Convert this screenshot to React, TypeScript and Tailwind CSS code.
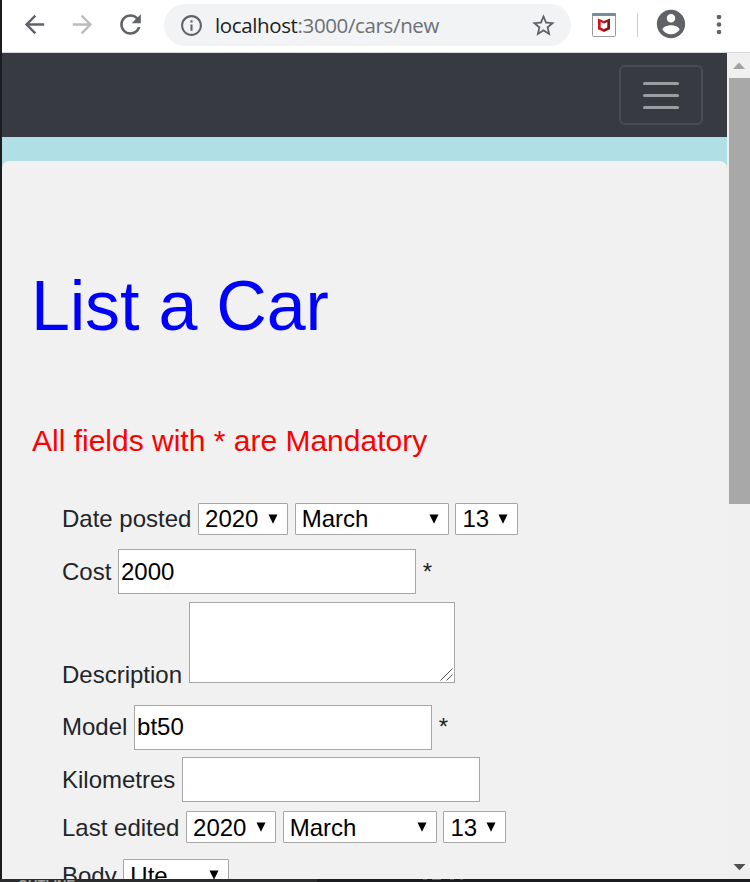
import type { ReactNode } from "react";

function Glyph({ d, className }: { d: string; className: string }) {
  return (
    <svg viewBox="0 0 24 24" fill="currentColor" className={`shrink-0 ${className}`}>
      <path d={d} />
    </svg>
  );
}

const icons = {
  back: "M20 11H7.83l5.59-5.59L12 4l-8 8 8 8 1.41-1.41L7.83 13H20v-2z",
  forward: "M12 4l-1.41 1.41L16.17 11H4v2h12.17l-5.58 5.59L12 20l8-8z",
  reload:
    "M17.65 6.35C16.2 4.9 14.21 4 12 4c-4.42 0-7.99 3.58-7.99 8s3.57 8 7.99 8c3.73 0 6.84-2.55 7.73-6h-2.08c-.82 2.33-3.04 4-5.65 4-3.31 0-6-2.69-6-6s2.69-6 6-6c1.66 0 3.14.69 4.22 1.78L13 11h7V4l-2.35 2.35z",
  info: "M11 17h2v-6h-2v6zm1-15C6.48 2 2 6.48 2 12s4.48 10 10 10 10-4.48 10-10S17.52 2 12 2zm0 18c-4.41 0-8-3.59-8-8s3.59-8 8-8 8 3.59 8 8-3.59 8-8 8zM11 9h2V7h-2v2z",
  star: "M22 9.24l-7.19-.62L12 2 9.19 8.63 2 9.24l5.46 4.73L5.82 21 12 17.27 18.18 21l-1.63-7.03L22 9.24zM12 15.4l-3.76 2.27 1-4.28-3.32-2.88 4.38-.38L12 6.1l1.71 4.04 4.38.38-3.32 2.88 1 4.28L12 15.4z",
  account:
    "M12 2C6.48 2 2 6.48 2 12s4.48 10 10 10 10-4.48 10-10S17.52 2 12 2zm0 3c1.66 0 3 1.34 3 3s-1.34 3-3 3-3-1.34-3-3 1.34-3 3-3zm0 14.2c-2.5 0-4.71-1.28-6-3.22.03-1.99 4-3.08 6-3.08 1.99 0 5.97 1.09 6 3.08-1.29 1.94-3.5 3.22-6 3.22z",
};

function Toolbar() {
  return (
    <header className="flex h-[53px] shrink-0 items-start border-b border-[#d5d7da] bg-white pl-[18px] text-[#5f6368]">
      <Glyph d={icons.back} className="mt-[9.5px] size-[29px]" />
      <Glyph d={icons.forward} className="mt-[9.5px] ml-[19px] size-[29px] text-[#babcbe]" />
      <Glyph d={icons.reload} className="mt-[9px] ml-[18px] size-[31px]" />
      <div className="mt-1 ml-[18px] flex h-[42px] w-[407px] items-center rounded-full bg-[#f1f3f4] pr-[14px] pl-[15px]">
        <Glyph d={icons.info} className="size-[25px]" />
        <span className="ml-[11px] flex-1 font-['Open_Sans',sans-serif] text-[20.5px] tracking-[-0.37px] whitespace-nowrap text-[#6c7074]">
          <span className="text-[#202124]">localhost</span>:3000/cars/new
        </span>
        <Glyph d={icons.star} className="size-[27px]" />
      </div>
      <svg viewBox="0 0 24 24" className="mt-[13px] ml-[21px] size-6 shrink-0">
        <rect x=".5" y=".5" width="23" height="23" rx="1" fill="#fff" stroke="#98999c" />
        <path d="M0 1q0-1 1-1h22q1 0 1 1v2H0z" fill="#748f9c" />
        <path d="M6 5.500l6 2.600v2.400L8.700 9v5.500L12 16v3l-6-2.800z" fill="#d3141c" />
        <path d="M18 5.500l-6 2.600v2.400L15.300 9v5.500L12 16v3l6-2.800z" fill="#89151a" />
      </svg>
      <span className="mt-[13px] ml-[21px] h-6 w-px bg-[#cccdcf]" />
      <Glyph d={icons.account} className="mt-[7px] ml-4 size-[34px]" />
      <svg viewBox="0 0 6 20" fill="currentColor" className="mt-[15px] ml-7 h-5 w-[6px] shrink-0">
        <circle cx="3" cy="2" r="2.3" />
        <circle cx="3" cy="9.5" r="2.3" />
        <circle cx="3" cy="17" r="2.3" />
      </svg>
    </header>
  );
}

function Scrollbar() {
  return (
    <div className="flex w-[23px] shrink-0 flex-col items-end justify-between bg-[#f0f0f0]">
      <div className="w-full">
        <svg viewBox="0 0 23 25" className="block h-[25px] w-[23px]">
          <path d="M12 9.5l6 6.5H6z" fill="#a2a2a2" />
        </svg>
        <div className="ml-[2px] h-[426px] bg-[#a8a8a8]" />
      </div>
      <svg viewBox="0 0 23 25" className="block h-[25px] w-[23px]">
        <path d="M6.500 10h12l-6 6.300z" fill="#505050" />
      </svg>
    </div>
  );
}

function Row({ label, className, labelClass, children }: { label: string; className: string; labelClass: string; children: ReactNode }) {
  return (
    <div className={`flex items-start gap-[6.67px] ${className}`}>
      <label className={labelClass}>{label}</label>
      {children}
    </div>
  );
}

function Select({ value, className, pad = "pb-px" }: { value: string; className: string; pad?: string }) {
  return (
    <div className={`relative h-8 shrink-0 ${className}`}>
      <select
        defaultValue={value}
        className={`block h-full w-full appearance-none rounded-[1px] border border-[#a6a6a6] bg-white pr-0 pl-[6px] leading-[30px] text-black ${pad}`}
      >
        <option>{value}</option>
      </select>
      <svg viewBox="0 0 10 10" className="absolute top-[11px] right-[10px] size-[10px]">
        <path d="M.5.5h9L5 9.700z" fill="#000" />
      </svg>
    </div>
  );
}

function TextInput({ value, pad = "" }: { value?: string; pad?: string }) {
  return (
    <input
      defaultValue={value}
      className={`h-[45px] w-[298px] shrink-0 border border-[#a6a6a6] bg-white px-[2px] text-black ${pad}`}
    />
  );
}

function DateSelects({ pad }: { pad?: string }) {
  return (
    <>
      <Select value="2020" className="mt-[2px] w-[90px]" pad={pad} />
      <Select value="March" className="mt-[2px] w-[154px]" pad={pad} />
      <Select value="13" className="mt-[2px] w-[63px]" pad={pad} />
    </>
  );
}

function CarForm() {
  return (
    <form className="mt-[42px] pl-[30px] text-[24px] leading-9 text-[#212529]">
      <Row label="Date posted" className="h-12" labelClass="">
        <DateSelects />
      </Row>
      <Row label="Cost" className="h-[53px]" labelClass="mt-[5px]">
        <TextInput value="2000" />
        <span className="mt-[5px]">*</span>
      </Row>
      <Row label="Description" className="h-[103px]" labelClass="mt-[55px]">
        <div className="relative">
          <textarea className="block h-[81px] w-[266px] resize-none border border-[#a6a6a6] bg-white" />
          <svg viewBox="0 0 13 13" className="absolute right-[2px] bottom-[2px] size-[13px]" stroke="#555" fill="none">
            <path d="M.5 12.500l12-12M6.500 12.500l6-6" />
          </svg>
        </div>
      </Row>
      <Row label="Model" className="h-[52px]" labelClass="mt-1">
        <TextInput value="bt50" pad="pb-[2px]" />
        <span className="mt-1">*</span>
      </Row>
      <Row label="Kilometres" className="h-[52px]" labelClass="mt-[5px]">
        <TextInput />
      </Row>
      <Row label="Last edited" className="h-[49px]" labelClass="mt-px">
        <DateSelects pad="pt-px" />
      </Row>
      <Row label="Body" className="h-12" labelClass="">
        <Select value="Ute" className="mt-px w-[106px]" pad="pt-px" />
      </Row>
    </form>
  );
}

export default function App() {
  return (
    <div className="flex h-[882px] w-[750px] flex-col overflow-hidden bg-[#1b1c1f] font-['Liberation_Sans',Arial,sans-serif]">
      <div className="ml-[2px] flex h-[879px] shrink-0 flex-col overflow-hidden">
        <Toolbar />
        <div className="flex min-h-0 flex-1">
          <main className="w-[725px] shrink-0 overflow-hidden bg-[#b0e0e6]">
            <nav className="flex h-[84px] items-center justify-end bg-[#373a41] pr-6">
              <button className="flex h-[60px] w-[84px] flex-col items-center justify-center gap-[9px] rounded-[6px] border-2 border-[#4a4d4f]">
                <span className="h-[3px] w-[36px] rounded-full bg-[#9b9d9f]" />
                <span className="h-[3px] w-[36px] rounded-full bg-[#9b9d9f]" />
                <span className="h-[3px] w-[36px] rounded-full bg-[#9b9d9f]" />
              </button>
            </nav>
            <section className="mt-6 h-[800px] rounded-[7px] bg-[#f1f1f1] pt-[103px] pl-[30px]">
              <h1 className="-ml-px text-[70px] leading-[84px] tracking-[-0.2px] text-[#0000ff]">List a Car</h1>
              <p className="mt-[75px] text-[30px] leading-9 text-[#ff0000]">All fields with * are Mandatory</p>
              <CarForm />
            </section>
          </main>
          <Scrollbar />
        </div>
      </div>
      <footer className="flex h-[3px] overflow-hidden text-[13px] leading-4 font-bold text-[#a0a0a0]">
        <div className="w-[317px] bg-[#2b2c2e] pl-[18px]">
          <span className="-mt-[2px] block">OUTLINE</span>
        </div>
        <div className="flex pl-[106px]">
          <span className="h-px w-[4px] bg-[#555]" />
          <span className="ml-[5px] h-px w-[9px] bg-[#666]" />
          <span className="ml-[9px] h-px w-[4px] bg-[#555]" />
          <span className="ml-[6px] h-px w-[3px] bg-[#555]" />
        </div>
      </footer>
    </div>
  );
}
